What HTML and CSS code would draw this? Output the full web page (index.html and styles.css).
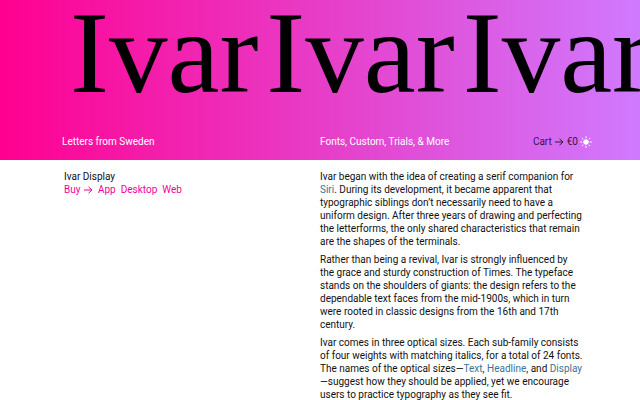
FILE: index.html
```
<!DOCTYPE html>
<html lang="en">

<head>
    <meta charset="UTF-8">
    <meta name="viewport" content="width=device-width, initial-scale=1.0">
    <title>Ivar Display</title>
    <link rel="stylesheet" href="styles.css">
</head>

<body>

    <header class="banner">
        <h1 class="specimen">
            <span>Ivar</span>
            <span>Ivar</span>
            <span>Ivar</span>
        </h1>
        <nav class="menu">
            <a class="home" href="#">Letters from Sweden</a>
            <a href="#">Fonts, Custom, Trials, &amp; More</a>
            <div class="tools">
                <a class="cart" href="#">Cart
                    <svg class="arrow" viewBox="0 0 10 8" aria-hidden="true"><path d="M1 4h8M5.5 .8 9 4 5.5 7.2" /></svg>
                    €0</a>
                <button class="theme" type="button" aria-label="Toggle theme">
                    <svg viewBox="0 0 12 12" aria-hidden="true">
                        <circle cx="6" cy="6" r="2.3" />
                        <path d="M6 .6v1.2M6 10.2v1.2M.6 6h1.2M10.2 6h1.2M2.2 2.2l.8.8M9 9l.8.8M2.2 9.8l.8-.8M9 3l.8-.8" />
                    </svg>
                </button>
            </div>
        </nav>
    </header>

    <main class="content">
        <section class="family">
            <h2>Ivar Display</h2>
            <div class="buy">
                <a href="#">Buy
                    <svg class="arrow" viewBox="0 0 10 8" aria-hidden="true"><path d="M1 4h8M5.5 .8 9 4 5.5 7.2" /></svg></a>
                <a href="#">App</a>
                <a href="#">Desktop</a>
                <a href="#">Web</a>
            </div>
        </section>

        <article class="about">
            <p>Ivar began with the idea of creating a serif companion for <a href="#">Siri</a>. During its development, it became apparent that typographic siblings don’t necessarily need to have a uniform design. After three years of drawing and perfecting the letterforms, the only shared characteristics that remain are the shapes of the terminals.</p>
            <p>Rather than being a revival, Ivar is strongly influenced by the grace and sturdy construction of Times. The typeface stands on the shoulders of giants: the design refers to the dependable text faces from the mid-1900s, which in turn were rooted in classic designs from the 16th and 17th century.</p>
            <p>Ivar comes in three optical sizes. Each sub-family consists of four weights with matching italics, for a total of 24 fonts. The names of the optical sizes—<a href="#">Text</a>, <a href="#">Headline</a>, and <a href="#">Display</a>—suggest how they should be applied, yet we encourage users to practice typography as they see fit.</p>
        </article>
    </main>

</body>

</html>
```
FILE: styles.css
```
* {
    box-sizing: border-box;
}

body {
    margin: 0;
    background-color: #fff;
    color: #111;
    font-family: Roboto, "Liberation Sans", sans-serif;
    font-size: 10px;
    line-height: 13px;
}

a {
    color: inherit;
    text-decoration: none;
}

h1,
h2,
p {
    margin: 0;
    font-size: inherit;
    font-weight: normal;
}

.banner {
    overflow: hidden;
    background: linear-gradient(to right, #ff0090, #d07aff);
}

.specimen {
    display: flex;
    gap: 8px;
    padding-left: 70px;
    color: #000;
    font-family: "Liberation Serif", serif;
    font-size: 117px;
    line-height: 106px;
}

.menu {
    display: grid;
    grid-template-columns: 50% 1fr auto;
    padding: 29px 0 12px;
    color: #fff;
}

.home {
    padding-left: 62px;
}

.tools {
    display: flex;
    align-items: center;
    gap: 2px;
    padding-right: 48px;
}

.cart {
    color: #3a1440;
}

.arrow {
    width: 10px;
    height: 8px;
    vertical-align: -1px;
    fill: none;
    stroke: currentColor;
}

.theme {
    display: flex;
    padding: 0;
    border: none;
    background: none;
    color: #fff;
    cursor: pointer;
}

.theme svg {
    width: 12px;
    height: 12px;
    fill: currentColor;
    stroke: currentColor;
    stroke-linecap: round;
}

.content {
    display: grid;
    grid-template-columns: 1fr 1fr;
    padding-top: 10px;
}

.family {
    padding-left: 64px;
}

.buy {
    display: flex;
    gap: 5px;
    color: #f5009b;
}

.about {
    padding-right: 56px;
}

.about p {
    margin-bottom: 5px;
}

.about a {
    color: #3d7299;
}
```
